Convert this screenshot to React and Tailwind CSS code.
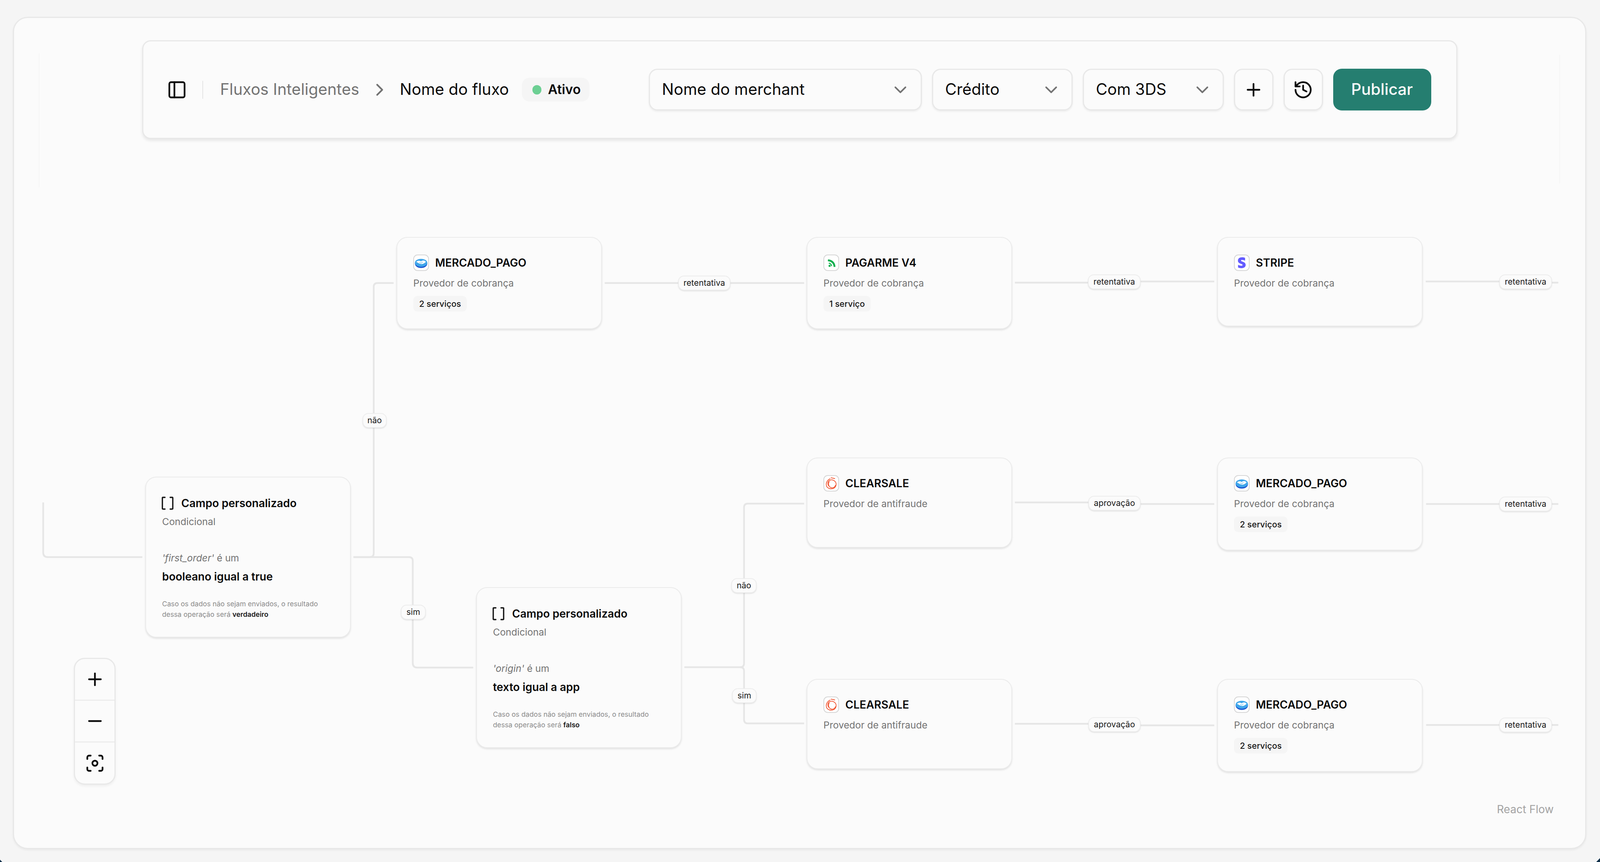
import React from 'react';
import { PanelLeft, ChevronRight, ChevronDown, Plus, Minus, History, Focus, Brackets } from 'lucide-react';
import { FaStripeS } from 'react-icons/fa';

// coordenadas no desenho original (4260 de largura), o svg estica para a janela
const EDGES = [
  'M115 1287V1415Q115 1427 127 1427H379',
  'M941 1427H985Q995 1427 995 1417V735Q995 725 1005 725H1048',
  'M941 1427H1089Q1099 1427 1099 1437V1698Q1099 1710 1111 1710H1260',
  'M1610 725H2141',
  'M2702 724H2897',
  'M3037 721H3233',
  'M3796 721H3992',
  'M4132 724H4149',
  'M1822 1709H1971Q1981 1709 1981 1699V1300Q1981 1290 1991 1290H2141',
  'M1971 1709Q1981 1709 1981 1719V1843Q1981 1853 1991 1853H2141',
  'M2702 1287H2898',
  'M3037 1291H3233',
  'M3797 1291H4149',
  'M2702 1854H2898',
  'M3037 1858H3233',
  'M3797 1857H4149',
];

function MercadoLogo() {
  return (
    <svg viewBox="5 5 32 32" className="h-full w-full">
      <ellipse cx="21" cy="23" rx="14" ry="10" fill="#1c55cf" />
      <ellipse cx="21" cy="21" rx="14" ry="9" fill="#3fa6ea" />
      <path d="M10 19c4-4 8-3 11-1 3-3 8-3 11 1-3 3-6 5-10 5-4 0-8-3-12-5z" fill="#ffffff" />
      <path d="M17 20l4 2 4-3" fill="none" stroke="#7cc4ef" strokeWidth="1.2" />
    </svg>
  );
}

function PagarmeLogo() {
  return (
    <svg viewBox="2 4 34 34" className="h-full w-full">
      <path d="M11 15Q26 17 27 31" fill="none" stroke="#12b04f" strokeWidth="4.5" />
      <circle cx="15" cy="28.5" r="2.6" fill="#12b04f" />
      <path d="M13 22Q19 23 20 29" fill="none" stroke="#12b04f" strokeWidth="2.5" />
    </svg>
  );
}

function StripeLogo() {
  return (
    <div className="flex h-full w-full items-center justify-center">
      <FaStripeS className="h-[28px] w-[26px] text-[#635bff]" />
    </div>
  );
}

function ClearsaleLogo() {
  return (
    <svg viewBox="6 6 30 30" className="h-full w-full" fill="none" stroke="#f0512c" strokeWidth="1.5">
      <path d="M19 11C12 14 9 21 11 27c2 5 9 7 14 5 6-2 8-9 5-14-3-4-9-6-13-3-4 3-4 9-1 12" />
      <path d="M20 9l9 2M17 17c-3 4-2 11 3 13 5 2 9-1 10-5" />
    </svg>
  );
}

function ProviderNode({ pos, logo, title, sub, pill }) {
  return (
    <div className={`absolute w-[526px] rounded-[28px] border-2 border-[#ebebeb] bg-[#fbfbfb] px-[41px] pt-[43px] shadow-[0_3px_4px_rgba(0,0,0,0.1)] ${pos}`}>
      <div className="flex h-[42px] items-center gap-[16px]">
        <div className="h-[42px] w-[40px] shrink-0 overflow-hidden rounded-[11px] border-2 border-[#d6d6d6] bg-white">{logo}</div>
        <span className="text-[28px] leading-[42px] font-semibold text-[#0a0a0a]">{title}</span>
      </div>
      <div className="mt-[13px] text-[24.5px] leading-[36px] text-[#737373]">{sub}</div>
      {pill && (
        <div className="mt-[15px] flex h-[40px] w-fit items-center rounded-[11px] bg-[#f5f5f5] px-[15px] text-[21.6px] font-medium text-[#171717]">
          {pill}
        </div>
      )}
    </div>
  );
}

function ConditionNode({ pos, field, cond, result }) {
  return (
    <div className={`absolute h-[412px] w-[526px] rounded-[28px] border-2 border-[#ebebeb] bg-[#fbfbfb] px-[41px] pt-[45px] shadow-[0_3px_4px_rgba(0,0,0,0.1)] ${pos}`}>
      <div className="flex h-[42px] items-center gap-[15px]">
        <Brackets size={40} strokeWidth={2} className="-ml-[6px] text-[#171717]" />
        <span className="text-[28px] leading-[42px] font-semibold text-[#0a0a0a]">Campo personalizado</span>
      </div>
      <div className="mt-[8px] text-[24.5px] leading-[36px] text-[#737373]">Condicional</div>
      <div className="mt-[57px] text-[24.5px] leading-[36px] text-[#737373]"><i>'{field}'</i> é um</div>
      <div className="mt-[10px] text-[28px] leading-[40px] font-semibold text-[#0a0a0a]">{cond}</div>
      <div className="mt-[36px] text-[17.7px] leading-[27px] text-[#8a8a8a]">
        Caso os dados não sejam enviados, o resultado<br />
        dessa operação será <b className="font-semibold text-[#171717]">{result}</b>
      </div>
    </div>
  );
}

function EdgeLabel({ pos, children }) {
  return (
    <div className={`absolute flex h-[38px] items-center justify-center rounded-[15px] border-2 border-[#ededed] bg-[#fbfbfb] text-[21.2px] text-[#171717] shadow-[0_2px_3px_rgba(0,0,0,0.1)] ${pos}`}>
      {children}
    </div>
  );
}

function Select({ width, label }) {
  return (
    <div className={`flex h-[107px] items-center justify-between rounded-[22px] border-[3px] border-[#e8e8e8] bg-[#fbfbfb] pr-[26px] pl-[31px] shadow-[0_3px_4px_rgba(0,0,0,0.06)] ${width}`}>
      <span className="text-[40.4px] text-[#0a0a0a]">{label}</span>
      <ChevronDown size={52} strokeWidth={1.8} className="text-[#737373]" />
    </div>
  );
}

function IconButton({ children }) {
  return (
    <div className="flex h-[107px] w-[101px] items-center justify-center rounded-[22px] border-[3px] border-[#e8e8e8] bg-[#fbfbfb] shadow-[0_3px_4px_rgba(0,0,0,0.06)]">
      {children}
    </div>
  );
}

function Toolbar() {
  return (
    <div className="mx-auto flex h-[253px] w-[3367px] items-center rounded-[22px] border-[3px] border-[#e8e8e8] bg-[#fbfbfb] pr-[64px] pl-[60px] shadow-[0_5px_7px_rgba(0,0,0,0.08)]">
      <PanelLeft size={52} strokeWidth={2} className="text-[#0a0a0a]" />
      <div className="mr-[44px] ml-[39px] h-[46px] w-[2px] bg-[#e5e5e5]" />
      <span className="text-[40.4px] text-[#737373]">Fluxos Inteligentes</span>
      <ChevronRight size={52} strokeWidth={2} className="mx-[26px] text-[#737373]" />
      <span className="text-[40.4px] text-[#0a0a0a]">Nome do fluxo</span>
      <div className="ml-[33px] flex h-[61px] items-center gap-[17px] rounded-[20px] bg-[#f5f5f5] pr-[22px] pl-[27px]">
        <div className="h-[24px] w-[23px] rounded-full bg-[#6ccf93]" />
        <span className="text-[33.6px] font-semibold text-[#0a0a0a]">Ativo</span>
      </div>
      <div className="ml-auto flex items-center gap-[26px]">
        <Select width="w-[699px]" label="Nome do merchant" />
        <Select width="w-[360px]" label="Crédito" />
        <Select width="w-[361px]" label="Com 3DS" />
        <IconButton><Plus size={52} strokeWidth={2} className="text-[#0a0a0a]" /></IconButton>
        <IconButton><History size={52} strokeWidth={2} className="text-[#0a0a0a]" /></IconButton>
        <div className="flex h-[107px] w-[251px] items-center justify-center rounded-[22px] bg-[#257e70] text-[40.4px] font-medium text-[#fafafa]">
          Publicar
        </div>
      </div>
    </div>
  );
}

function ZoomControls() {
  return (
    <div className="absolute top-[1685px] left-[189px] flex w-[107px] flex-col overflow-hidden rounded-[28px] border-[3px] border-[#e8e8e8] bg-[#fbfbfb] shadow-[0_4px_6px_rgba(0,0,0,0.05)]">
      <div className="flex h-[107px] items-center justify-center border-b-[3px] border-[#ededed]">
        <Plus size={52} strokeWidth={2} className="text-[#0a0a0a]" />
      </div>
      <div className="flex h-[107px] items-center justify-center border-b-[3px] border-[#ededed]">
        <Minus size={52} strokeWidth={2} className="text-[#0a0a0a]" />
      </div>
      <div className="flex h-[105px] items-center justify-center">
        <Focus size={52} strokeWidth={2} className="text-[#0a0a0a]" />
      </div>
    </div>
  );
}

export default function App() {
  return (
    <div className="relative h-[2208px] w-full overflow-hidden bg-[#f5f5f5] font-['Inter',sans-serif]">
      {/* moldura principal */}
      <div className="absolute top-[43px] left-[33px] h-[2132px] w-[4028px] rounded-[38px] border-[3px] border-[#e8e8e8] bg-[#fbfbfb] pt-[57px] shadow-[0_3px_5px_rgba(0,0,0,0.05)]">
        <Toolbar />
      </div>

      <div className="absolute top-[137px] left-[99px] h-[343px] w-[2px] bg-[#f5f5f5]" />
      <div className="absolute top-[140px] left-[3992px] h-[330px] w-[2px] bg-[#f5f5f5]" />

      <svg className="absolute inset-0 h-full w-full" viewBox="0 0 4260 2208" preserveAspectRatio="none" fill="none">
        {EDGES.map((d) => (
          <path key={d} d={d} stroke="#e6e6e6" strokeWidth="4.5" />
        ))}
        <path d="M0 2202L6 2208H0z" fill="#0f2f4a" />
        <path d="M4260 2198L4250 2208H4260z" fill="#0f2f4a" />
      </svg>

      <ProviderNode pos="left-[1015px] top-[607px] h-[236px]" logo={<MercadoLogo />} title="MERCADO_PAGO" sub="Provedor de cobrança" pill="2 serviços" />
      <ProviderNode pos="left-[2065px] top-[607px] h-[236px]" logo={<PagarmeLogo />} title="PAGARME V4" sub="Provedor de cobrança" pill="1 serviço" />
      <ProviderNode pos="left-[3116px] top-[607px] h-[229px]" logo={<StripeLogo />} title="STRIPE" sub="Provedor de cobrança" />
      <ProviderNode pos="left-[2065px] top-[1172px] h-[231px]" logo={<ClearsaleLogo />} title="CLEARSALE" sub="Provedor de antifraude" />
      <ProviderNode pos="left-[3116px] top-[1172px] h-[238px]" logo={<MercadoLogo />} title="MERCADO_PAGO" sub="Provedor de cobrança" pill="2 serviços" />
      <ProviderNode pos="left-[2065px] top-[1739px] h-[231px]" logo={<ClearsaleLogo />} title="CLEARSALE" sub="Provedor de antifraude" />
      <ProviderNode pos="left-[3116px] top-[1739px] h-[238px]" logo={<MercadoLogo />} title="MERCADO_PAGO" sub="Provedor de cobrança" pill="2 serviços" />

      <ConditionNode pos="left-[372px] top-[1221px]" field="first_order" cond="booleano igual a true" result="verdadeiro" />
      <ConditionNode pos="left-[1219px] top-[1504px]" field="origin" cond="texto igual a app" result="falso" />

      <EdgeLabel pos="left-[1736px] top-[706px] w-[134px]">retentativa</EdgeLabel>
      <EdgeLabel pos="left-[2785px] top-[703px] w-[135px]">retentativa</EdgeLabel>
      <EdgeLabel pos="left-[3838px] top-[703px] w-[135px]">retentativa</EdgeLabel>
      <EdgeLabel pos="left-[2786px] top-[1270px] w-[134px]">aprovação</EdgeLabel>
      <EdgeLabel pos="left-[3838px] top-[1272px] w-[135px]">retentativa</EdgeLabel>
      <EdgeLabel pos="left-[2786px] top-[1837px] w-[134px]">aprovação</EdgeLabel>
      <EdgeLabel pos="left-[3838px] top-[1838px] w-[135px]">retentativa</EdgeLabel>
      <EdgeLabel pos="left-[928px] top-[1058px] w-[62px]">não</EdgeLabel>
      <EdgeLabel pos="left-[1026px] top-[1549px] w-[64px]">sim</EdgeLabel>
      <EdgeLabel pos="left-[1872px] top-[1481px] w-[65px]">não</EdgeLabel>
      <EdgeLabel pos="left-[1874px] top-[1763px] w-[63px]">sim</EdgeLabel>

      <ZoomControls />

      <span className="absolute top-[2055px] left-[3832px] text-[28px] leading-[36px] text-[#a3a3a3]">React Flow</span>
    </div>
  );
}
